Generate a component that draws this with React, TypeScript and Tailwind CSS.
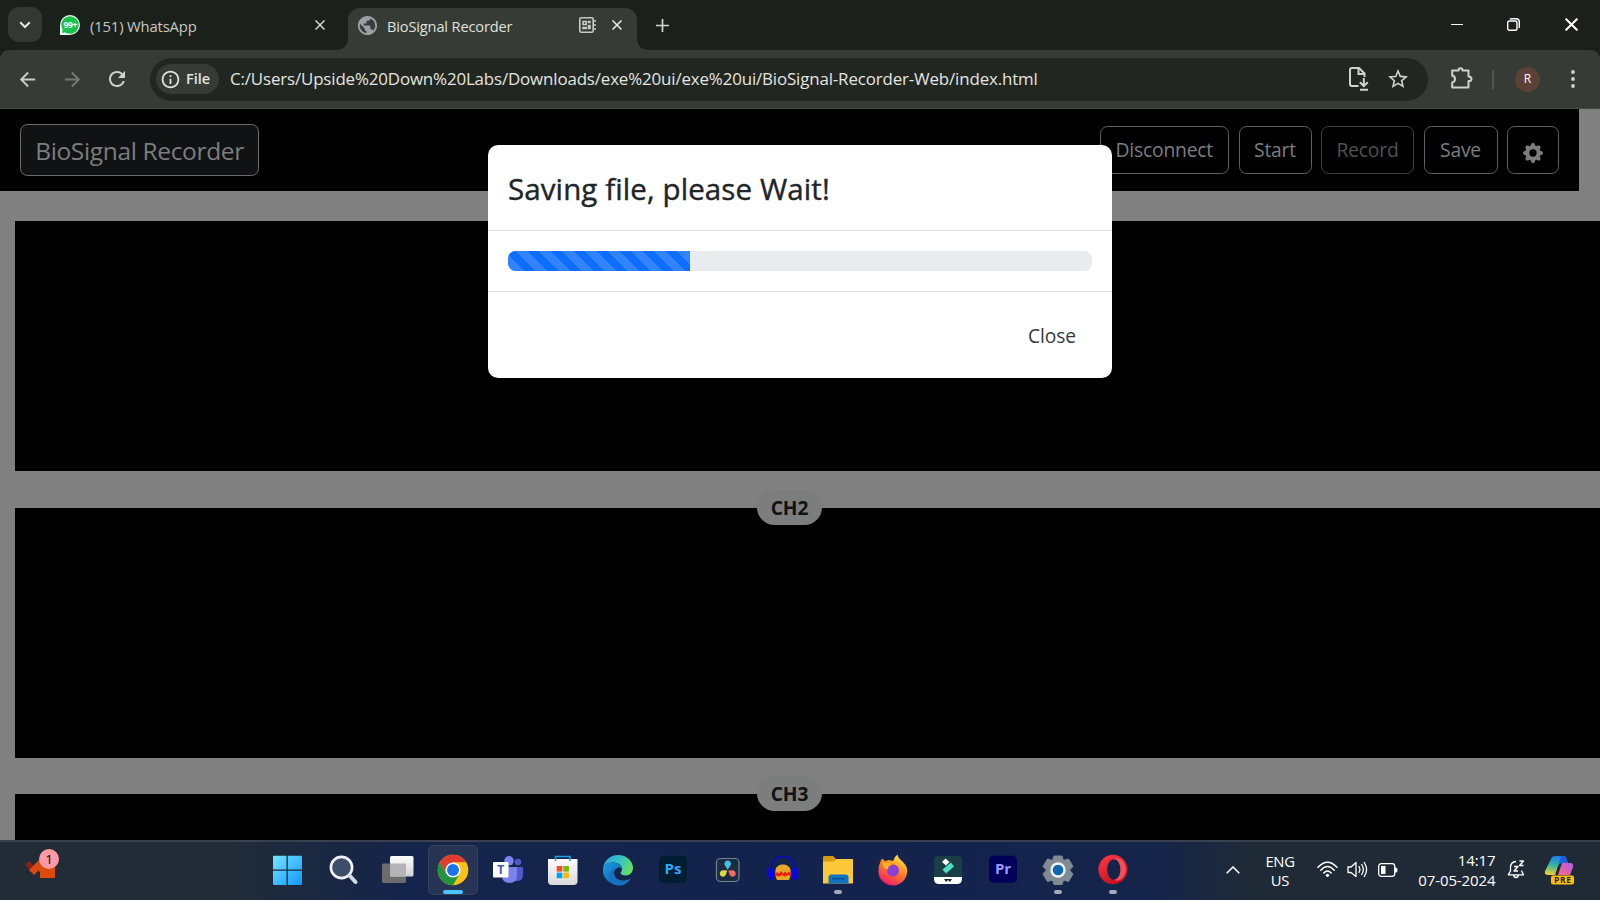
import React from "react";
import { MdArrowBack, MdArrowForward, MdRefresh, MdInfoOutline, MdStarBorder, MdPublic } from "react-icons/md";
import { BsGearFill } from "react-icons/bs";

function CloseX({ size, className }: { size: number; className: string }) {
  return (
    <svg width={size} height={size} viewBox="0 0 10 10" className={className} fill="none" stroke="currentColor">
      <path d="M.5 .5 9.5 9.5M9.5 .5 .5 9.5" strokeWidth="1.5" />
    </svg>
  );
}

function TabStrip() {
  return (
    <div className="flex h-[50px] bg-[#1c201b] text-[#c7c9c4]">
      <div className="mt-[7px] ml-[8px] flex h-[35px] w-[34px] items-center justify-center rounded-[11px] bg-[#343832]">
        <svg width="12" height="8" viewBox="0 0 12 8" fill="none" stroke="#e3e5e0" strokeWidth="2">
          <path d="M1.2 1.2 6 6 10.800 1.2" />
        </svg>
      </div>
      <div className="ml-[18px] flex w-[275px] shrink-0 items-center">
        <svg width="20" height="20" viewBox="0 0 20 20">
          <path d="M0 20V10a10 10 0 1 1 10 10z" fill="#f4f6f4" />
          <circle cx="10" cy="10" r="8.700" fill="#17c14a" />
          <path d="M2 18l1-5 4 4z" fill="#17c14a" />
          <text x="10.400" y="13.200" fontSize="8.500" fontWeight="700" fill="#fff" textAnchor="middle" textLength="14" fontFamily="Open Sans, sans-serif">99+</text>
        </svg>
        <span className="ml-[10px] w-[225px] shrink-0 pt-[3px] text-[14.800px] tracking-[-0.15px] whitespace-nowrap">(151) WhatsApp</span>
        <CloseX size={10} className="shrink-0 text-[#d5d7d2]" />
      </div>
      <div className="flex items-end">
        <svg width="13" height="12" viewBox="0 0 13 12"><path d="M13 0V12H0Q13 12 13 0" fill="#373b35" /></svg>
      </div>
      <div className="mt-[8px] flex h-[42px] w-[289px] items-center rounded-t-[12px] bg-[#373b35] pb-[8px] pl-[8px] text-[#dfe1dc]">
        <MdPublic size={23} className="text-[#9aa0a6]" />
        <span className="ml-[8px] w-[192px] shrink-0 pt-[3px] text-[14.600px] tracking-[-0.15px] whitespace-nowrap">BioSignal Recorder</span>
        <svg width="18" height="16" viewBox="0 0 18 16" fill="none" stroke="#c9cbc6" strokeWidth="1.600">
          <rect x=".8" y=".8" width="13.400" height="14.400" rx="1.500" />
          <path d="M4 4.500h3.200v3H4zM4 10.500h3.200v1H4zM9.500 4.500h1.500v1H9.500zM9.500 8.500h1.500v3H9.500zM14.500 4h2.500M14.500 8h2.500M14.500 12h2.500" />
        </svg>
        <CloseX size={10} className="ml-[15px] text-[#eceeea]" />
      </div>
      <div className="flex items-end">
        <svg width="13" height="12" viewBox="0 0 13 12"><path d="M0 0V12H13Q0 12 0 0" fill="#373b35" /></svg>
      </div>
      <div className="ml-[6px] flex items-center">
        <svg width="13" height="13" viewBox="0 0 13 13" stroke="#d5d7d2" strokeWidth="1.700"><path d="M6.500 0V13M0 6.500H13" /></svg>
      </div>
      <div className="ml-auto flex items-center pr-[22px] pb-[1px] text-white">
        <div className="h-[1.500px] w-[12px] bg-white" />
        <svg width="13" height="13" viewBox="0 0 13 13" className="ml-[44px]" fill="none" stroke="#fff" strokeWidth="1.400">
          <rect x=".7" y="3" width="9.300" height="9.300" rx="1.800" />
          <path d="M3 1.200Q3.500 .7 4.500 .7H9Q12.300 .7 12.300 4V8.500Q12.300 9.500 11.800 10" />
        </svg>
        <CloseX size={13} className="ml-[45px]" />
      </div>
    </div>
  );
}

function Toolbar() {
  return (
    <div className="bg-[#1c201b]">
      <div className="flex h-[59px] items-center rounded-t-[9px] border-b border-[#454843] bg-[#373b35] text-[#d0d2cd]">
        <MdArrowBack size={23} className="ml-[16px] text-[#c9cbc6]" />
        <MdArrowForward size={23} className="ml-[22px] text-[#777a74]" />
        <MdRefresh size={24} className="ml-[21px]" />
        <div className="ml-[21px] flex h-[43px] w-[1278px] items-center rounded-full bg-[#222620] pl-[6px]">
          <div className="flex h-[30px] w-[63px] items-center rounded-full bg-[#373b35] pl-[4px]">
            <MdInfoOutline size={21} className="text-[#e3e5e0]" />
            <span className="ml-[5px] text-[14.500px] font-semibold text-[#e3e5e0]">File</span>
          </div>
          <span className="ml-[11px] text-[16.900px] tracking-[-0.142px] whitespace-nowrap text-[#e3e5e0]">
            C:/Users/Upside%20Down%20Labs/Downloads/exe%20ui/exe%20ui/BioSignal-Recorder-Web/index.html
          </span>
          <svg width="20" height="24" viewBox="0 0 20 24" className="ml-auto" fill="none" stroke="#d0d2cd" strokeWidth="2">
            <path d="M9.500 19H3Q1 19 1 17V3Q1 1 3 1H10L15.500 6.500V10" />
            <path d="M9.500 1V7H15.500M14.800 11V19M10.800 15.200 14.800 19 18.800 15.200M11 22.700H19" />
          </svg>
          <MdStarBorder size={24} className="mr-[18px] ml-[17px]" />
        </div>
        <svg width="22" height="22" viewBox="0 0 22 22" className="mb-[2px] ml-[23px]" fill="none" stroke="#d0d2cd" strokeWidth="2">
          <path d="M1.200 3.500H7.500Q7.500 1.200 9.500 1.200T11.500 3.500H17.500V9.500Q20.500 9.700 20.500 12T17.500 14V20.500H1.200V15.500Q4 14.800 4 12T1.200 8.500Z" strokeLinejoin="round" />
        </svg>
        <div className="ml-[19px] h-[19px] w-[2px] bg-[#51554e]" />
        <div className="ml-[21px] flex size-[25px] items-center justify-center rounded-full bg-[#5d4037] text-[12px] text-white">R</div>
        <svg width="4" height="18" viewBox="0 0 4 18" className="ml-[31px]" fill="#d0d2cd">
          <circle cx="2" cy="2" r="1.900" /><circle cx="2" cy="9" r="1.900" /><circle cx="2" cy="16" r="1.900" />
        </svg>
      </div>
    </div>
  );
}

const navButton = "flex h-[48px] items-center justify-center rounded-[7.500px] border pt-[1px] text-[19.300px] tracking-[-0.2px] ";

function Navbar() {
  return (
    <div className="flex h-[82px] w-[1579px] shrink-0 items-center bg-black pr-[20px] pl-[20px] text-[#7c7d7d]">
      <div className="flex h-[52px] w-[239px] items-center justify-center rounded-[7.500px] border border-[#6c6d6e] bg-[#101214] pt-[2px] text-[24.500px] tracking-[-0.35px] whitespace-nowrap">
        BioSignal Recorder
      </div>
      <div className="ml-auto flex gap-[9.500px]">
        <div className={navButton + "w-[129.500px] border-[#606162]"}>Disconnect</div>
        <div className={navButton + "w-[73px] border-[#606162]"}>Start</div>
        <div className={navButton + "w-[93px] border-[#3e3f3f] text-[#505151]"}>Record</div>
        <div className={navButton + "w-[74px] border-[#606162]"}>Save</div>
        <div className={navButton + "w-[52px] border-[#606162]"}>
          <BsGearFill size={20} className="mt-[5px]" />
        </div>
      </div>
    </div>
  );
}

function Channel({ label }: { label?: string }) {
  return (
    <div className="relative ml-[15px] h-[250px] shrink-0 bg-black">
      {label && (
        <div className="absolute -top-[18px] left-[742px] flex h-[35px] w-[65px] items-center justify-center rounded-full bg-[#7c7d7d] pt-[2px] text-[19.200px] font-bold tracking-[-0.1px] text-[#101214]">
          {label}
        </div>
      )}
    </div>
  );
}

function SavingModal() {
  return (
    <div className="absolute top-[36px] left-[488px] flex h-[233px] w-[624px] flex-col rounded-[10px] bg-white text-[#212529]">
      <div className="flex h-[86px] items-center border-b border-[#dee2e6] pt-[3px] pl-[20px] text-[29.500px] font-medium tracking-[0.1px] whitespace-nowrap [-webkit-text-stroke:0.4px_#212529]">
        Saving file, please Wait!
      </div>
      <div className="flex h-[60px] items-center px-[20px]">
        <div className="h-[20px] w-full overflow-hidden rounded-[7.500px] bg-[#e9ecef]">
          <div className="h-full w-[182px] bg-[#0d6efd] bg-[linear-gradient(45deg,rgba(255,255,255,.15)_25%,transparent_25%,transparent_50%,rgba(255,255,255,.15)_50%,rgba(255,255,255,.15)_75%,transparent_75%,transparent)] bg-[length:23px_23px] bg-[position:8px_0px]" />
        </div>
      </div>
      <div className="flex flex-1 items-center justify-end border-t border-[#dee2e6] pt-[3px] pr-[36px]">
        <span className="text-[19.200px] tracking-[-0.1px] text-[#343a40]">Close</span>
      </div>
    </div>
  );
}

function AppCell({ children, active, running }: { children: React.ReactNode; active?: boolean; running?: boolean }) {
  return (
    <div className="flex w-[55px] justify-center">
      <div className={active ? "mt-[3px] flex h-[50px] w-[50px] flex-col items-center rounded-[5px] border border-[#33405f] bg-[#273453] pt-[8px]" : "mt-[3px] flex h-[50px] w-[50px] flex-col items-center pt-[9px]"}>
        <svg width="32" height="32" viewBox="0 0 32 32">{children}</svg>
        {active && <div className="mt-[4px] h-[4px] w-[20px] rounded-full bg-[#4cc2ff]" />}
        {running && <div className="mt-[4px] h-[4px] w-[8px] rounded-full bg-[#a3a9b8]" />}
      </div>
    </div>
  );
}

function Taskbar() {
  return (
    <div className="flex h-[60px] border-t-2 border-[#394150] bg-[linear-gradient(90deg,#212c36_0px,#212c36_220px,#15244a_400px,#14234d_850px,#15244a_1160px,#1f2a37_1250px,#1f2a35_1600px)] text-white">
      <div className="relative mt-[18px] ml-[25px] h-[30px] w-[30px]">
        <svg width="32" height="20" viewBox="0 0 32 20">
          <path d="M0 5 4 1 11 8 7 12z" fill="#8c1d18" />
          <path d="M4 10 14 0 19 5 9 15z" fill="#d9480f" />
          <path d="M18 5H30V18H15V12L12 9z" fill="#dd4a0b" />
        </svg>
        <div className="absolute -top-[11px] left-[14px] flex size-[20px] items-center justify-center rounded-full bg-[#fd99a6] text-[13.500px] text-black">1</div>
      </div>
      <div className="ml-[205px] flex">
        <AppCell>
          <defs>
            <linearGradient id="win" gradientUnits="userSpaceOnUse" x1="0" y1="0" x2="32" y2="32"><stop offset="0" stopColor="#7ce9ff" /><stop offset="1" stopColor="#0a93fa" /></linearGradient>
          </defs>
          <path d="M1 2.800q0-1 1-1H14.500V15.500H1zM15.800 1.800H29q1 0 1 1V15.500H15.800zM1 16.800H14.500V31H2q-1 0-1-1zM15.800 16.800H30V30q0 1-1 1H15.800z" fill="url(#win)" />
        </AppCell>
        <AppCell>
          <circle cx="14.500" cy="13.500" r="10.600" fill="#3e4d68" stroke="#eef1f5" strokeWidth="2.600" />
          <path d="M22.500 21.500 28.500 28" stroke="#d5dbe5" strokeWidth="4" strokeLinecap="round" />
        </AppCell>
        <AppCell>
          <defs><linearGradient id="tv" x1="0" y1="0" x2="0" y2="1"><stop offset="0" stopColor="#fff" /><stop offset="1" stopColor="#cfd0d3" /></linearGradient></defs>
          <rect x="0" y="9.500" width="24" height="19.500" rx="1.500" fill="#6c6c6d" />
          <rect x="8" y="2" width="23.500" height="20.500" rx="1.500" fill="url(#tv)" />
          <path d="M8 9.500H24V22.500H8z" fill="#b4b4b6" />
        </AppCell>
        <AppCell active>
          <circle cx="16" cy="16" r="15.300" fill="#fbc116" />
          <path d="M2.750 8.350A15.300 15.300 0 0 1 29.250 8.350H16L9.400 19.800z" fill="#e33b2e" />
          <path d="M2.750 8.350A15.300 15.300 0 0 0 16 31.300L22.600 19.800H9.400z" fill="#229342" />
          <circle cx="16" cy="16" r="7.600" fill="#fff" />
          <circle cx="16" cy="16" r="6" fill="#1a73e8" />
        </AppCell>
        <AppCell>
          <circle cx="26" cy="8" r="3.300" fill="#5059c9" />
          <path d="M22 13H31V21q0 6-6 6H22z" fill="#5059c9" />
          <circle cx="17" cy="6.800" r="4.800" fill="#7b83eb" />
          <path d="M10 13H25V21.500q0 7.500-7.500 7.500T10 21.500z" fill="#7b83eb" />
          <rect x="1" y="8" width="15.500" height="15.500" rx="1" fill="#fff" />
          <text x="8.800" y="20.200" fontSize="12" fontWeight="700" fill="#4b53bc" textAnchor="middle" fontFamily="Open Sans, sans-serif">T</text>
        </AppCell>
        <AppCell>
          <defs><linearGradient id="st" x1="0" y1="0" x2="0" y2="1"><stop offset="0" stopColor="#fdfdfd" /><stop offset="1" stopColor="#d9d9dc" /></linearGradient></defs>
          <path d="M1 5H30.500V27q0 4-4 4H5q-4 0-4-4z" fill="url(#st)" />
          <path d="M8.500 7V2.500H23V7" fill="none" stroke="#1fa2e2" strokeWidth="1.600" />
          <path d="M9.700 12h5.600v5.600H9.700z" fill="#f04e22" /><path d="M16.300 12h5.600v5.600h-5.600z" fill="#7cb800" />
          <path d="M9.700 18.600h5.600v5.600H9.700z" fill="#00a1ee" /><path d="M16.300 18.600h5.600v5.600h-5.600z" fill="#fcb500" />
        </AppCell>
        <AppCell>
          <defs>
            <linearGradient id="e1" x1="0" y1="0.300" x2="1" y2="0.600"><stop offset="0" stopColor="#2aa5dc" /><stop offset=".5" stopColor="#35c1c8" /><stop offset="1" stopColor="#6ae05a" /></linearGradient>
            <linearGradient id="e2" x1="0" y1="0" x2="1" y2="1"><stop offset="0" stopColor="#1e9be4" /><stop offset="1" stopColor="#0b55a5" /></linearGradient>
          </defs>
          <g transform="translate(0 .5)">
            <path d="M1 14C2 6 8 .5 16 .5 25 .5 31 7 31 13.500 31 18 27.500 21 24 21 20.500 21 18.500 19.500 18.500 18.500 18.500 17.500 20 17 20 14.500 20 10 15 8 11 8 5 8 2 11 1 14z" fill="url(#e1)" />
            <path d="M1 14C2 11 5 8 11 8c5 0 9 3 9 6.500C20 12 13 12 12 18c-1 7 6 11 12 10A15 15 0 0 1 1 14z" fill="url(#e2)" />
            <path d="M12 18c0 5 4 8 9 8 4 0 7-1.500 8.300-2.600C27 27 23 31 17 31 10 31 7 26 7.500 21 8 16 11 14 14 13.300 12.500 14.500 12 16 12 18z" fill="#1470c0" />
          </g>
        </AppCell>
        <AppCell>
          <rect x="2" y="1.800" width="28" height="27" rx="4.500" fill="#001d31" />
          <text x="16" y="19.800" fontSize="15" fontWeight="700" fill="#31a8ff" textAnchor="middle" fontFamily="Open Sans, sans-serif">Ps</text>
        </AppCell>
        <AppCell>
          <rect x="4.500" y="4.500" width="22.500" height="23" rx="4" fill="#1d2b40" stroke="#6b8592" strokeWidth="1.200" />
          <path d="M15.700 15.800 13 11.500a3.200 3.200 0 1 1 5.400 0z" fill="#3fc2e6" />
          <path d="M15.200 16.500 14 20.500a3.200 3.200 0 1 1-2.600-4.300z" fill="#d5dd45" />
          <path d="M16.300 16.500 17.500 20.500a3.200 3.200 0 1 0 2.600-4.300z" fill="#f06a6a" />
        </AppCell>
        <AppCell>
          <path d="M4 17C3 7 9 2.500 16 2.500S29 7 28 17" fill="none" stroke="#0808c8" strokeWidth="1.600" />
          <ellipse cx="4.200" cy="19.500" rx="3.200" ry="6.500" fill="#0505f0" /><ellipse cx="27.800" cy="19.500" rx="3.200" ry="6.500" fill="#0505f0" />
          <path d="M9 14Q12 10 16 10.500 20 10 23 14 25 20 22 26H10Q7 20 9 14z" fill="#e8a526" />
          <path d="M8 20 10 18 12 19.500 14 17 16 19.500 18 17.500 20 19.500 22 17.500 24 20V22L21 21 18 22.500 15 21 12 22.500 8 21.500z" fill="#f01d0a" />
        </AppCell>
        <AppCell running>
          <path d="M1 3.500Q1 2 2 2H11L14 5V10H1z" fill="#d49a12" />
          <path d="M1 7.500H11.500L14.500 5H31V29.500H1z" fill="#fdc93a" />
          <path d="M6.500 29.500V23.500q0-3 3-3h14q3 0 3 3V29.500z" fill="#0f74c4" />
          <path d="M10.500 24.700h12" stroke="#0a4f95" strokeWidth="1.500" />
        </AppCell>
        <AppCell>
          <defs><linearGradient id="ff" x1="0.800" y1="0" x2="0.300" y2="1"><stop offset="0" stopColor="#fff14a" /><stop offset=".45" stopColor="#ff8a1f" /><stop offset="1" stopColor="#f5156c" /></linearGradient></defs>
          <path d="M3.500 7.500 5 4.500 8 7 12 6 16 7Q17.500 2.500 20.500 .5 21 4 25 7L28.500 11Q31 15 30 19A14.300 14 0 0 1 1.500 17Q1.500 11 3.500 7.500z" fill="url(#ff)" />
          <circle cx="16" cy="16.500" r="6" fill="#8b3fd6" />
          <path d="M5 9Q12 8 15 11L11.500 12.500 11 15.500 7 14z" fill="#ffb224" />
        </AppCell>
        <AppCell>
          <path d="M2 6q0-4 4-4H26q4 0 4 4V24H2z" fill="#1b3d46" />
          <path d="M2 23H30V25q0 5-5 5H7q-5 0-5-5z" fill="#fff" />
          <path d="M13.500 4.500 17.500 8 14 11.500 10 8z" fill="#fff" />
          <path d="M19 8.500 22 12.500 14 19.500 10.500 15.500z" fill="#4be0bf" />
          <path d="M12 25 14 28 16 26 18 28 20 25z" fill="#1b2a33" />
        </AppCell>
        <AppCell>
          <rect x="2" y="1.800" width="28" height="27" rx="4.500" fill="#00005b" />
          <text x="16" y="19.800" fontSize="15" fontWeight="700" fill="#9999ff" textAnchor="middle" fontFamily="Open Sans, sans-serif">Pr</text>
        </AppCell>
        <AppCell running>
          <path d="M12 2H20L21.500 6.500 26.500 5 31 12.500 27.500 16 31 20 26.500 27.500 21.500 26 20 30.500H12L10.500 26 5.500 27.500 1 20 4.500 16 1 12.500 5.500 5 10.500 6.500z" fill="#7f8a92" strokeLinejoin="round" stroke="#7f8a92" />
          <circle cx="16" cy="16" r="7.700" fill="#eef1f4" /><circle cx="16" cy="16" r="5.300" fill="#1264b4" />
        </AppCell>
        <AppCell running>
          <defs><linearGradient id="op" x1="0" y1="0" x2="0.600" y2="1"><stop offset="0" stopColor="#ff3b45" /><stop offset="1" stopColor="#c40f1e" /></linearGradient></defs>
          <path fillRule="evenodd" d="M16 .8a14.700 14.700 0 1 0 .01 0zM17 5.300c4 0 6.500 5 6.500 10.200S21 25.700 17 25.700 10.300 21 10.300 15.500 13 5.300 17 5.300z" fill="url(#op)" />
          <path d="M17 5.300C21 2 29 7 29 15.500S21 29 17 25.700c4 0 6.500-5 6.500-10.200S21 5.300 17 5.300z" fill="#f0525a" />
        </AppCell>
      </div>
      <div className="ml-[85.500px] flex items-start">
        <svg width="14" height="8" viewBox="0 0 14 8" className="mt-[24px]" fill="none" stroke="#fff" strokeWidth="1.600"><path d="M.7 7.200 7 1 13.300 7.200" /></svg>
        <div className="mt-[10px] ml-[24px] w-[33px] text-center text-[14.800px] leading-[18.500px] tracking-[-0.3px]">
          <div>ENG</div>
          <div>US</div>
        </div>
        <svg width="21" height="17" viewBox="0 0 21 17" className="mt-[19px] ml-[20px]" fill="none" stroke="#fff" strokeWidth="1.500" strokeLinecap="round">
          <path d="M1 6.200Q10.500-3.800 20 6.200M3.800 9.200Q10.500 1.800 17.200 9.200M6.800 12Q10.500 7.800 14.200 12" />
          <circle cx="10.500" cy="14.300" r="1.600" fill="#fff" stroke="none" />
        </svg>
        <svg width="21" height="18" viewBox="0 0 21 18" className="mt-[19px] ml-[9px]" fill="none" stroke="#fff" strokeWidth="1.300" strokeLinejoin="round" strokeLinecap="round">
          <path d="M1 6H4L9 1.500V15.500L4 11.500H1zM12 5.500Q13.800 8.500 12 11.500M14.700 3.500Q18 8.500 14.700 13.500M17.200 1.500Q22 8.500 17.200 15.500" />
        </svg>
        <svg width="20" height="14" viewBox="0 0 20 14" className="mt-[21px] ml-[10px]" fill="none" stroke="#fff" strokeWidth="1.300">
          <rect x=".7" y=".7" width="16" height="12.600" rx="2.500" />
          <rect x="3" y="3" width="4.500" height="8" fill="#fff" stroke="none" />
          <path d="M17 4.500h1q1.500 0 1.500 2.500T18 9.500H17z" fill="#fff" stroke="none" />
        </svg>
        <div className="mt-[8px] w-[98px] text-right text-[15px] leading-[20px] tracking-[-0.1px] whitespace-nowrap">
          <div>14:17</div>
          <div>07-05-2024</div>
        </div>
        <svg width="18" height="19" viewBox="0 0 18 19" className="mt-[18px] ml-[11px]" fill="none" stroke="#fff" strokeWidth="1.300" strokeLinejoin="round">
          <path d="M9 1.500Q3.500 2 3.500 7.500V11L1.200 14.800H16.500L14.800 11.500V10.500M6.500 15Q7 17.500 9 17.500T11.500 15" />
          <path d="M7 6.500H11L7 11H11M12.500 1H16.500L12.500 5.500H16.500" />
        </svg>
        <svg width="32" height="32" viewBox="0 0 32 32" className="mt-[13px] ml-[19.500px]">
          <defs>
            <linearGradient id="c1" x1="0.500" y1="0" x2="0.300" y2="1"><stop offset="0" stopColor="#1b7fe8" /><stop offset=".5" stopColor="#35b6a0" /><stop offset="1" stopColor="#f3d02f" /></linearGradient>
            <linearGradient id="c2" x1="1" y1="0" x2="0" y2="1"><stop offset="0" stopColor="#b45cf0" /><stop offset="1" stopColor="#f9687a" /></linearGradient>
          </defs>
          <path d="M7 4Q8 1 11 1H19Q22 1 22.500 4L24 8H18Q15 8 14 11L11 20H4Q0 20 1 16z" fill="url(#c1)" />
          <path d="M17 1H19.500Q22 1 22.500 4L24 8H18Q15.500 8 14.500 10z" fill="#1f5fdc" />
          <path d="M18 8H26Q30 8 29 12L26 20H14z" fill="url(#c2)" />
          <rect x="7" y="20.500" width="23" height="9" rx="2" fill="#fdc010" />
          <text x="18.500" y="28" fontSize="8.500" fontWeight="700" fill="#2b2410" textAnchor="middle" textLength="17" fontFamily="Open Sans, sans-serif">PRE</text>
        </svg>
      </div>
    </div>
  );
}

export default function App() {
  return (
    <div className="flex h-[900px] w-[1600px] flex-col overflow-hidden font-['Open_Sans','Noto_Sans',sans-serif]">
      <TabStrip />
      <Toolbar />
      <div className="relative flex h-[731px] flex-col overflow-hidden bg-[#808080]">
        <Navbar />
        <div className="mt-[30px] flex flex-col gap-[36.500px]">
          <Channel />
          <Channel label="CH2" />
          <Channel label="CH3" />
        </div>
        <SavingModal />
      </div>
      <Taskbar />
    </div>
  );
}
